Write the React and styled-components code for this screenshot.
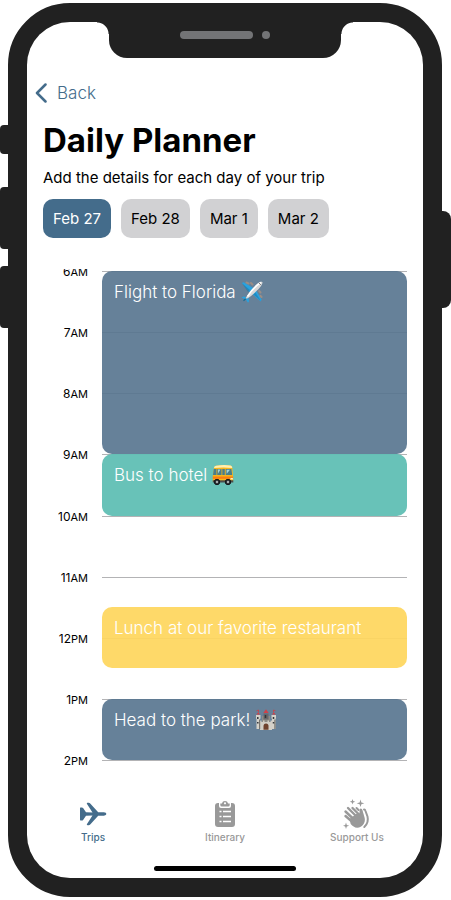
import React, { useState } from "react";
import styled, { createGlobalStyle } from "styled-components";

const GlobalStyle = createGlobalStyle`
  *, *::before, *::after { box-sizing: border-box; }
  body {
    margin: 0;
    background: #ffffff;
    color: #000000;
    font-family: Inter, "Liberation Sans", sans-serif;
  }
  button { font: inherit; border: 0; padding: 0; background: none; cursor: pointer; }
`;

const FRAME = "#212121";
const BLUE = "#446c8b";
const GRAY = "#999999";

const Stage = styled.main`
  display: grid;
  grid-template-columns: 8px minmax(0, 1fr) 9px;
  min-height: 100vh;
  padding: 3px 0;
`;

const ButtonRail = styled.div`
  display: flex;
  flex-direction: column;
  padding-top: ${(p) => p.$start}px;
`;

const SideButton = styled.span`
  height: ${(p) => p.$length}px;
  margin-bottom: ${(p) => p.$gap || 0}px;
  background: ${FRAME};
  border-radius: ${(p) => (p.$right ? "0 8px 8px 0" : "4px 0 0 4px")};
`;

const Phone = styled.div`
  display: flex;
  flex-direction: column;
  border: 19px solid ${FRAME};
  border-radius: 62px;
  background: ${FRAME};
`;

const Screen = styled.div`
  flex: 1;
  display: flex;
  flex-direction: column;
  background: #ffffff;
  border-radius: 43px;
`;

const Notch = styled.div`
  display: flex;
  align-items: flex-start;
  justify-content: center;
  height: 36px;
`;

const NotchEar = styled.span`
  width: 12px;
  height: 12px;
  background: radial-gradient(
    circle at ${(p) => (p.$right ? "100%" : "0")} 100%,
    transparent 11px,
    ${FRAME} 12px
  );
`;

const NotchBody = styled.div`
  display: flex;
  justify-content: center;
  gap: 9px;
  width: 232px;
  height: 36px;
  padding: 9px 0 0 0;
  background: ${FRAME};
  border-radius: 0 0 18px 18px;
`;

const Speaker = styled.span`
  width: 73px;
  height: 8px;
  border-radius: 4px;
  background: #737476;
`;

const Camera = styled.span`
  width: 8px;
  height: 8px;
  border-radius: 50%;
  background: #737476;
`;

const BackButton = styled.button`
  && {
    display: flex;
    align-items: center;
    align-self: flex-start;
    gap: 10px;
    height: 24px;
    margin: 23px 0 0 8px;
    color: ${BLUE};
    font-size: 17px;
    font-weight: 300;
  }
`;

const Header = styled.header`
  padding: 13px 16px 0;
`;

const Title = styled.h1`
  margin: 0;
  font-size: 33px;
  line-height: 44px;
  font-weight: 700;
`;

const Subtitle = styled.p`
  margin: 6px 0 0;
  font-size: 15px;
  line-height: 20px;
`;

const Days = styled.div`
  display: flex;
  flex-wrap: wrap;
  gap: 10px;
  margin-top: 11px;
`;

const Day = styled.button`
  && {
    height: 39px;
    padding: 0 10px;
    border-radius: 10px;
    font-size: 15px;
    color: ${(p) => (p.$active ? "#ffffff" : "#000000")};
    background: ${(p) => (p.$active ? BLUE : "#d1d1d3")};
  }
`;

const Timeline = styled.section`
  flex: 1;
  display: grid;
  grid-template-columns: 45px minmax(0, 1fr);
  grid-template-rows: repeat(16, minmax(30px, 1fr)) 1px;
  column-gap: 14px;
  margin-top: 31px;
  padding: 2px 16px 8px;
  overflow: hidden;
`;

const HourLabel = styled.div`
  grid-column: 1;
  grid-row: ${(p) => p.$row};
  display: flex;
  align-items: center;
  justify-content: flex-end;
  height: 1px;
  font-size: 12px;
  white-space: nowrap;
`;

const Meridiem = styled.span`
  font-size: 11px;
`;

const HourLine = styled.div`
  grid-column: 2;
  grid-row: ${(p) => p.$row};
  height: 1px;
  background: #b3b3b5;
`;

const Event = styled.article`
  grid-column: 2;
  grid-row: ${(p) => p.$start} / ${(p) => p.$end};
  display: flex;
  align-items: flex-start;
  gap: 5px;
  padding: 10px 12px;
  border-radius: 10px;
  background: ${(p) => p.$color};
  color: #ffffff;
  font-size: 17px;
  font-weight: 300;
  line-height: 22px;
`;

const Tabs = styled.nav`
  display: grid;
  grid-template-columns: repeat(3, 1fr);
  padding-top: 29px;
`;

const Tab = styled.a`
  display: flex;
  flex-direction: column;
  align-items: center;
  color: ${(p) => (p.$active ? BLUE : GRAY)};
  font-size: 10px;
  line-height: 14px;
  font-weight: 500;
  text-decoration: none;
`;

const TabIcon = styled.span`
  display: grid;
  place-items: center;
  height: 32px;
`;

const HomeIndicator = styled.div`
  align-self: center;
  width: 142px;
  height: 5px;
  margin: 22px 0 7px;
  border-radius: 3px;
  background: #000000;
`;

const PlaneEmoji = () => (
  <svg width="22" height="22" viewBox="0 0 22 22" role="img" aria-label="airplane">
    <path d="M.8 2l2-.8L13 7.500l-4 4zM19.800 20.500l.8-2L14.500 8.500l-4 4z" fill="#2aa2df" />
    <path d="M1 2.200L9 9l-2 2zM20 20l-6-9-2 2z" fill="#1678aa" opacity=".55" />
    <path d="M.5 16.500l2-1 5 1 .5 4-1 1.200-2-3z" fill="#2aa2df" />
    <path d="M2.500 19.800l4.500-4" stroke="#176d94" strokeWidth="1.200" />
    <path d="M5.500 1.500l2 1M10 2l1.500 1.500M19.500 11.500l-1.300-1.500M20.500 16l-1-1.200" stroke="#9b8d86" strokeWidth="2" strokeLinecap="round" />
    <path d="M4.500 17.800c1-3.500 8.500-12.500 12.300-15.500C19 .5 21.800.2 21.500 1.800c-.4 3.200-5.500 8-10 12-2.300 2-4.900 4-7 4z" fill="#d8d8d8" />
    <path d="M6.500 15.500C9 11.500 15 4.500 20 1.500" stroke="#fff" strokeWidth="1.500" fill="none" />
    <path d="M18.200 2.300l1.500 1.300" stroke="#555" strokeWidth="1" />
  </svg>
);

const BusEmoji = () => (
  <svg width="22" height="22" viewBox="0 0 22 22" role="img" aria-label="bus">
    <path d="M2 4q0-2 2-2.200Q11 .6 18.500 1.500q1.700.4 1.800 2.200l.8 9v5H.8v-6z" fill="#f6b51d" />
    <path d="M2 4q0-2 2-2.200Q11 .6 18.500 1.500q1.700.4 1.800 2.500-9-1-18.300 0z" fill="#fff0b3" />
    <path d="M1.800 5h2.700v6H1zM5.300 5h4.200v6H5.200zM10.300 5h2.500v6h-2.500zM13.700 5h5.700l.8 6h-6.500z" fill="#497d8c" />
    <path d="M6 5.500h2.500L6 9.500zM14.600 5.700H18l-3.300 4z" fill="#a6d3d9" />
    <path d="M.8 12.500h20.300v2.300H.8z" fill="#fb7c12" />
    <path d="M.8 16.300h20.500v2.200H.8z" fill="#4b4d4d" />
    <path d="M18.500 14.700h2.400" stroke="#fff2b9" strokeWidth="1.500" />
    <g fill="#272b30" stroke="#14181c">
      <circle cx="5" cy="18" r="2.700" />
      <circle cx="16" cy="18" r="2.700" />
    </g>
    <circle cx="5" cy="18" r="1.200" fill="#a9b0b3" />
    <circle cx="16" cy="18" r="1.200" fill="#a9b0b3" />
  </svg>
);

const CastleEmoji = () => (
  <svg width="22" height="22" viewBox="0 0 22 22" role="img" aria-label="castle">
    <path d="M7 7h8v13H7z" fill="#8e8c86" />
    <path d="M8.500 4.500h5v6h-5z" fill="#66676b" />
    <path d="M1 6h4.500v3l-.5 1.500V20H1.500V10.500L1 9zM16.500 6H21v3l-.5 1.500V20H17v-9.500l-.5-1.500z" fill="#d4d1c9" />
    <path d="M5 11.500h1.500V13H8v-1.500h1.500V13h3v-1.500H14V13h1.500v-1.500H17V21H5z" fill="#d2cfc7" />
    <path d="M4 10.500h1.200V20H4zM19.300 10.500h1.200V20h-1.200z" fill="#77756f" />
    <path d="M11 .3L13.700 4H8.300zM3.200 3l1.800 2.500H1.500zM18.800 3l1.700 2.500H17z" fill="#cf4148" />
    <path d="M3.500 3V1L1.500 1.800M18.500 3V1l2 .8" stroke="#ba4d55" strokeWidth="1" fill="none" />
    <path d="M8.500 20.800V17a2.500 2.500 0 0 1 5 0v3.800z" fill="#70432f" />
    <path d="M10.500 6v3M2.800 8v2M18.500 8v2M2.800 13v1.500M18.500 13v1.500" stroke="#33363a" strokeWidth="1.500" />
  </svg>
);

const PlaneIcon = () => (
  <svg width="28" height="24" viewBox="0 0 28 24" aria-hidden="true" fill="currentColor">
    <path d="M1.500 5.500h1.400q.7 0 1.200.6L7 10.200l6.500.2L8 1.900Q7.300.8 8.500.8h1.200q.9 0 1.500.7l8 8.800h5.700q2.500.3 2.500 1.700t-2.500 1.700h-5.700l-8 8.800q-.6.7-1.500.7H8.500q-1.200 0-.5-1.100l5.500-8.500-6.500.2-2.900 4.100q-.5.600-1.200.6H1.500q-.5 0-.5-.7V6.200q0-.7.5-.7z" />
  </svg>
);

const ClipboardIcon = () => (
  <svg width="22" height="28" viewBox="0 0 22 28" aria-hidden="true">
    <path d="M4 3h14q3 0 3 3v18q0 3-3 3H4q-3 0-3-3V6q0-3 3-3z" fill="currentColor" />
    <path d="M5 2.500h12V6q0 2-2 2H7q-2 0-2-2z" fill="#fff" />
    <path d="M6.300 3.500h1.600A3.200 3.200 0 0 1 14.100 3.500h1.600V5q0 1.500-1.500 1.500H7.800Q6.300 6.500 6.300 5z" fill="currentColor" />
    <circle cx="11" cy="3.300" r="1.100" fill="#fff" />
    <path d="M5.500 11.500h2M9 11.500h8M5.500 16.500h2M9 16.500h8M5.500 21.500h2M9 21.500h8" stroke="#fff" strokeWidth="1.500" />
  </svg>
);

const ClapIcon = () => (
  <svg width="28" height="30" viewBox="0 0 28 30" aria-hidden="true" fill="currentColor">
    <path d="M9.500 0l.7 2 2 .7-2 .7-.7 2-.7-2-2-.7 2-.7zM17.500.500l.9 2.900 2.900.9-2.900.9-.9 2.900-.9-2.900-2.900-.9 2.900-.9zM3 23.500l.8 2.400 2.400.8-2.400.8L3 29.900l-.8-2.400-2.400-.8 2.400-.8z" />
    <g stroke="currentColor" strokeWidth="2.400" strokeLinecap="round">
      <path d="M2.500 17l7 6M2.500 12.500l8 7.500M5 9l8 8M9.500 9l6.500 6.500" />
    </g>
    <path d="M6.500 20l8-6 2 .5v-3.500q0-1.600 1.300-1.600 1.200 0 1.700 1.800l2.200 7.800c1 4.500-2.200 9.700-7.500 9.700-2.700 0-4.700-1.700-6.500-3.700z" />
    <path d="M13.500 9l2 2M21 10.500q1-.2 1.500 1.500l2 5.500c1 4-.5 8-3.200 10.500" fill="none" stroke="currentColor" strokeWidth="2" strokeLinecap="round" />
  </svg>
);

const days = ["Feb 27", "Feb 28", "Mar 1", "Mar 2"];

const hours = [
  ["6", "AM"], ["7", "AM"], ["8", "AM"], ["9", "AM"], ["10", "AM"],
  ["11", "AM"], ["12", "PM"], ["1", "PM"], ["2", "PM"],
];

const events = [
  { title: "Flight to Florida", icon: <PlaneEmoji />, start: 1, end: 7, color: "rgba(87, 116, 143, 0.91)" },
  { title: "Bus to hotel", icon: <BusEmoji />, start: 7, end: 9, color: "rgba(98, 191, 181, 0.96)" },
  { title: "Lunch at our favorite restaurant", start: 12, end: 14, color: "rgba(254, 214, 94, 0.93)" },
  { title: "Head to the park!", icon: <CastleEmoji />, start: 15, end: 17, color: "rgba(87, 116, 143, 0.91)" },
];

export default function App() {
  const [day, setDay] = useState(days[0]);
  return (
    <>
      <GlobalStyle />
      <Stage>
        <ButtonRail $start={122}>
          <SideButton $length={29} $gap={33} />
          <SideButton $length={62} $gap={17} />
          <SideButton $length={62} />
        </ButtonRail>
        <Phone>
          <Screen>
            <Notch>
              <NotchEar />
              <NotchBody>
                <Speaker />
                <Camera />
              </NotchBody>
              <NotchEar $right />
            </Notch>
            <BackButton type="button">
              <svg width="12" height="20" viewBox="0 0 12 20" aria-hidden="true">
                <path d="M10.500 1.500L2 10l8.500 8.500" fill="none" stroke="currentColor" strokeWidth="2.500" strokeLinecap="round" strokeLinejoin="round" />
              </svg>
              Back
            </BackButton>
            <Header>
              <Title>Daily Planner</Title>
              <Subtitle>Add the details for each day of your trip</Subtitle>
              <Days>
                {days.map((d) => (
                  <Day key={d} type="button" $active={d === day} aria-pressed={d === day} onClick={() => setDay(d)}>
                    {d}
                  </Day>
                ))}
              </Days>
            </Header>
            <Timeline>
              {hours.map(([hour, half], i) => (
                <React.Fragment key={hour}>
                  <HourLabel $row={i * 2 + 1}>
                    <span>{hour}<Meridiem>{half}</Meridiem></span>
                  </HourLabel>
                  <HourLine $row={i * 2 + 1} />
                </React.Fragment>
              ))}
              {events.map((e) => (
                <Event key={e.title} $start={e.start} $end={e.end} $color={e.color}>
                  <span>{e.title}</span>
                  {e.icon}
                </Event>
              ))}
            </Timeline>
            <Tabs>
              <Tab href="#trips" $active aria-current="page">
                <TabIcon><PlaneIcon /></TabIcon>
                Trips
              </Tab>
              <Tab href="#itinerary">
                <TabIcon><ClipboardIcon /></TabIcon>
                Itinerary
              </Tab>
              <Tab href="#support">
                <TabIcon><ClapIcon /></TabIcon>
                Support Us
              </Tab>
            </Tabs>
            <HomeIndicator />
          </Screen>
        </Phone>
        <ButtonRail $start={208}>
          <SideButton $right $length={97} />
        </ButtonRail>
      </Stage>
    </>
  );
}
